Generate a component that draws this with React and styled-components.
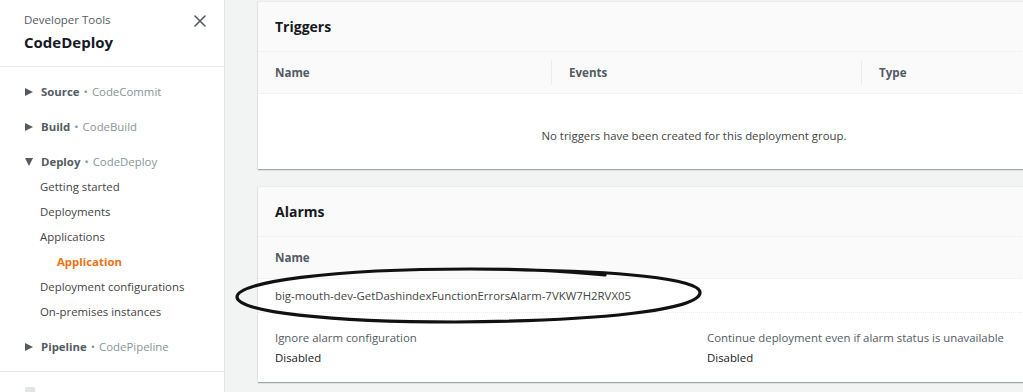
import styled, { createGlobalStyle } from 'styled-components'

const Global = createGlobalStyle`
html, body { margin: 0; padding: 0; }
body {
  font-family: "Open Sans", "Liberation Sans", sans-serif;
  color: #444;
  background: #f2f3f3;
}
`

const Page = styled.div`
width: 1023px;
height: 392px;
display: flex;
overflow: hidden;
position: relative;
`

const Sidebar = styled.aside`
width: 224px;
flex-shrink: 0;
background: #fff;
border-right: 1px solid #e3e5e5;
display: flex;
flex-direction: column;
overflow: hidden;
& > * { flex-shrink: 0; }
`

const SideHead = styled.div`
height: 67px;
box-sizing: border-box;
padding: 12px 16px 0 24px;
border-bottom: 1px solid #e6e8e8;
position: relative;
`

const Kicker = styled.div`
font-size: 11.5px;
line-height: 16px;
color: #545b64;
`

const AppName = styled.div`
font-size: 15px;
font-weight: 700;
line-height: 20px;
margin-top: 4px;
color: #16191f;
`

const Close = styled.div`
position: absolute;
top: 12px;
right: 16px;
width: 16px;
height: 16px;
`

const Nav = styled.nav`
padding: 12px 0 12px 0;
border-bottom: 1px solid #e6e8e8;
`

const Section = styled.div`
margin-bottom: 10px;
&:last-child { margin-bottom: 0; }
`

const SectionRow = styled.div`
height: 25px;
display: flex;
align-items: center;
padding-left: 25px;
font-size: 11.4px;
`

const Caret = styled.span`
width: 0;
height: 0;
margin-right: 8px;
${p => p.$open ? `
  border-left: 4.5px solid transparent;
  border-right: 4.5px solid transparent;
  border-top: 8px solid #545b64;
` : `
  border-top: 4.5px solid transparent;
  border-bottom: 4.5px solid transparent;
  border-left: 8px solid #545b64;
`}
`

const SectionName = styled.span`
font-weight: 700;
color: #545b64;
`

const Service = styled.span`
color: #879596;
&::before {
  content: "•";
  margin: 0 4px;
}
`

const Item = styled.div`
height: 25px;
display: flex;
align-items: center;
padding-left: ${p => p.$sub ? 57 : 40}px;
font-size: 11.4px;
color: ${p => p.$active ? '#ec7211' : '#444'};
font-weight: ${p => p.$active ? 700 : 400};
`

const SideFoot = styled.div`
padding: 15px 0 0 25px;
`

const FootIcon = styled.div`
width: 10px;
height: 10px;
border-radius: 2px;
background: #e3e5e5;
`

const Main = styled.main`
flex: 1;
overflow: hidden;
padding: 1px 0 0 33px;
display: flex;
flex-direction: column;
gap: 17px;
position: relative;
`

const Card = styled.section`
width: 872px;
flex-shrink: 0;
background: #fff;
border-top: 1px solid #eaeded;
box-shadow: 0 1px 1px 0 rgba(0, 22, 22, 0.3), 0 1px 2px rgba(0, 0, 0, 0.08);
`

const CardHead = styled.h2`
margin: 0;
height: 50px;
box-sizing: border-box;
display: flex;
align-items: center;
padding-left: 17px;
background: #fafafa;
border-bottom: 1px dotted #eaeded;
font-size: 14px;
font-weight: 700;
color: #16191f;
`

const HeadRow = styled.div`
height: 41px;
display: grid;
grid-template-columns: ${p => p.$cols};
background: #fafafa;
border-bottom: 1px dotted #eaeded;
`

const HeadCell = styled.div`
display: flex;
align-items: center;
padding-left: 17px;
font-size: 11.6px;
font-weight: 700;
color: #545b64;
& + & {
  border-left: 1px solid #eaeded;
  margin: 8px 0;
}
`

const Empty = styled.div`
height: 75px;
display: flex;
align-items: center;
justify-content: center;
font-size: 11.4px;
color: #444;
padding-top: 8px;
box-sizing: border-box;
`

const DataRow = styled.div`
height: 33px;
display: flex;
align-items: center;
padding-left: 17px;
font-size: 11.4px;
color: #444;
border-bottom: 1px dotted #eaeded;
`

const Settings = styled.div`
display: grid;
grid-template-columns: 432px 1fr;
padding: 17px 17px 16px 17px;
`

const Field = styled.div`
display: flex;
flex-direction: column;
gap: 4px;
font-size: 11.4px;
line-height: 16px;
`

const Label = styled.div`
color: #545b64;
`

const Value = styled.div`
color: #16191f;
`

const Ink = styled.svg`
position: absolute;
left: 0;
top: 0;
pointer-events: none;
`

export default function App() {
  return (
    <>
      <Global />
      <Page>
        <Sidebar>
          <SideHead>
            <Kicker>Developer Tools</Kicker>
            <AppName>CodeDeploy</AppName>
            <Close>
              <svg width="16" height="16" viewBox="0 0 16 16">
                <path d="M3 3 L13 13 M13 3 L3 13" stroke="#545b64" strokeWidth="1.6" strokeLinecap="round" />
              </svg>
            </Close>
          </SideHead>
          <Nav>
            <Section>
              <SectionRow><Caret /><SectionName>Source</SectionName><Service>CodeCommit</Service></SectionRow>
            </Section>
            <Section>
              <SectionRow><Caret /><SectionName>Build</SectionName><Service>CodeBuild</Service></SectionRow>
            </Section>
            <Section>
              <SectionRow><Caret $open /><SectionName>Deploy</SectionName><Service>CodeDeploy</Service></SectionRow>
              <Item>Getting started</Item>
              <Item>Deployments</Item>
              <Item>Applications</Item>
              <Item $sub $active>Application</Item>
              <Item>Deployment configurations</Item>
              <Item>On-premises instances</Item>
            </Section>
            <Section>
              <SectionRow><Caret /><SectionName>Pipeline</SectionName><Service>CodePipeline</Service></SectionRow>
            </Section>
          </Nav>
          <SideFoot><FootIcon /></SideFoot>
        </Sidebar>
        <Main>
          <Card>
            <CardHead>Triggers</CardHead>
            <HeadRow $cols="293px 310px 1fr">
              <HeadCell>Name</HeadCell>
              <HeadCell>Events</HeadCell>
              <HeadCell>Type</HeadCell>
            </HeadRow>
            <Empty>No triggers have been created for this deployment group.</Empty>
          </Card>
          <Card>
            <CardHead>Alarms</CardHead>
            <HeadRow $cols="1fr">
              <HeadCell>Name</HeadCell>
            </HeadRow>
            <DataRow>big-mouth-dev-GetDashindexFunctionErrorsAlarm-7VKW7H2RVX05</DataRow>
            <Settings>
              <Field>
                <Label>Ignore alarm configuration</Label>
                <Value>Disabled</Value>
              </Field>
              <Field>
                <Label>Continue deployment even if alarm status is unavailable</Label>
                <Value>Disabled</Value>
              </Field>
            </Settings>
          </Card>
        </Main>
        <Ink width="1023" height="392" viewBox="0 0 1023 392">
          <path
            d="M520 270 C 610 271, 702 278, 700 293 C 698 310, 600 321, 455 322 C 330 322, 237 312, 237 297 C 237 282, 330 269, 470 269 C 530 269, 560 271, 605 275"
            fill="none"
            stroke="#111"
            strokeWidth="3.2"
            strokeLinecap="round"
          />
        </Ink>
      </Page>
    </>
  )
}
